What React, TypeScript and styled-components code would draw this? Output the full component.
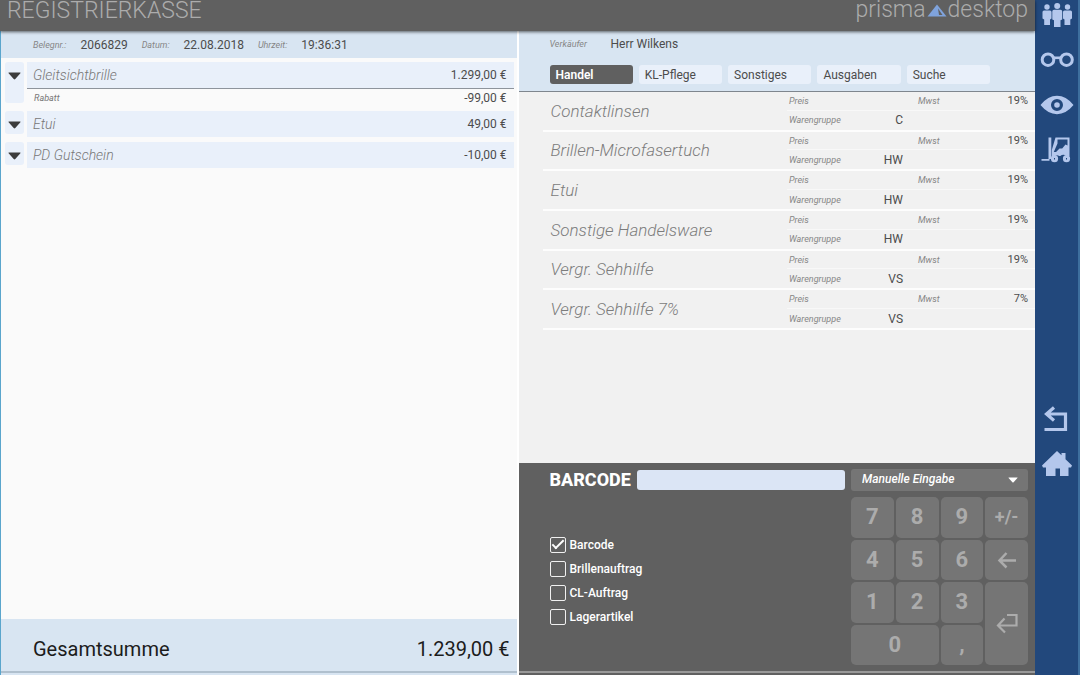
import React, { useState } from "react";
import styled, { createGlobalStyle, css } from "styled-components";

const color = {
  slate: "#606060",
  key: "#757575",
  keyText: "#acacac",
  rail: "#22487c",
  railIcon: "#b4c7ec",
  bar: "#d8e5f2",
  row: "#e9f0fa",
  label: "#868686",
  text: "#4c4c4c",
};

const GlobalStyle = createGlobalStyle`
  *, *::before, *::after { box-sizing: border-box; }
  body {
    margin: 0;
    background: #fafafa;
    color: ${color.text};
    font-family: Roboto, "Liberation Sans", sans-serif;
    font-size: 12px;
    line-height: 16px;
  }
  button, input, select { font: inherit; color: inherit; margin: 0; }
  button { border: 0; padding: 0; background: none; cursor: pointer; }
  ul, dl, dd, h1, h2 { margin: 0; padding: 0; }
  ul { list-style: none; }
`;

const Shell = styled.div`
  display: grid;
  grid-template-columns: minmax(0, 1fr) 45px;
  min-height: 100vh;
`;

const Workspace = styled.div`
  display: flex;
  flex-direction: column;
`;

const Header = styled.header`
  display: flex;
  justify-content: space-between;
  z-index: 1;
  height: 31px;
  padding: 0 7px;
  background: ${color.slate};
  box-shadow: 0 1px 3px rgba(0, 0, 0, 0.6);
  color: #acacac;
  font-weight: 300;
`;

const Title = styled.h1`
  font-size: 23px;
  line-height: 21px;
  font-weight: 300;
`;

const Brand = styled.div`
  display: flex;
  align-items: center;
  height: 20px;
  gap: 1px;
  font-size: 23px;
  line-height: 20px;
`;

const Panels = styled.main`
  flex: 1;
  display: grid;
  grid-template-columns: minmax(0, 1fr) minmax(0, 1fr);
`;

const Receipt = styled.section`
  display: flex;
  flex-direction: column;
  border-left: 1px solid #5aa5cc;
  border-right: 1px solid #fff;
  background: #fafafa;
`;

const ReceiptInfo = styled.dl`
  display: flex;
  align-items: center;
  height: 27px;
  padding-left: 32px;
  background: ${color.bar};
`;

const Label = styled.dt`
  color: ${color.label};
  font-size: 9px;
  font-style: italic;
`;

const InfoValue = styled.dd`
  && { margin: 0 14px; }
`;

const Positions = styled.ul`
  display: flex;
  flex-direction: column;
  flex: 1;
  gap: 5px;
  padding: 4px 3px 0 4px;
  border-top: 0;
`;

const Position = styled.li`
  display: grid;
  grid-template-columns: 19px minmax(0, 1fr);
  column-gap: 3px;
  align-items: start;
`;

const Toggle = styled.button<{ $tall?: boolean }>`
  display: flex;
  justify-content: center;
  height: ${(p) => (p.$tall ? "41px" : "23px")};
  padding-top: 10px;
  border-radius: 3px;
  background: ${color.row};
`;

const PositionMain = styled.div`
  display: flex;
  align-items: center;
  justify-content: space-between;
  height: 26px;
  padding: 0 7px 0 6px;
  background: ${color.row};
`;

const PositionName = styled.span`
  color: #777;
  font-size: 14px;
  font-style: italic;
  font-weight: 300;
`;

const Discount = styled.div`
  display: flex;
  align-items: center;
  justify-content: space-between;
  height: 18px;
  padding: 0 7px;
  border-top: 1px solid #8e949c;
`;

const DiscountName = styled.span`
  color: #777;
  font-size: 9px;
  font-style: italic;
`;

const Total = styled.div`
  display: flex;
  align-items: center;
  justify-content: space-between;
  height: 56px;
  padding: 4px 7px 0 32px;
  background: linear-gradient(#b0c0ce, #b0c0ce) 0 52px / 100% 2px no-repeat ${color.bar};
  color: #1c1c1c;
  font-size: 20px;
  line-height: 24px;
`;

const Sales = styled.section`
  display: flex;
  flex-direction: column;
  border-left: 1px solid #fff;
  background: #f1f1f1;
`;

const SalesHead = styled.div`
  height: 61px;
  padding: 5px 45px 0 31px;
  border-bottom: 1px solid #7f868e;
  background: ${color.bar};
`;

const Seller = styled.dl`
  display: grid;
  grid-template-columns: 61px auto;
  align-items: center;
  margin-bottom: 13px;
`;

const Tabs = styled.div`
  display: grid;
  grid-template-columns: repeat(5, minmax(0, 1fr));
  gap: 6px;
`;

const Tab = styled.button`
  height: 19px;
  padding: 0 6px;
  border-radius: 3px;
  background: ${color.row};
  text-align: left;
  line-height: 18px;
  &[aria-selected="true"] {
    background: ${color.slate};
    color: #fff;
    font-weight: 600;
  }
`;

const Products = styled.ul`
  display: grid;
  grid-auto-rows: minmax(0, 1fr);
  height: 238px;
  margin-left: 24px;
`;

const Product = styled.li`
  display: grid;
  grid-template-columns: minmax(0, 1fr) 248px;
  border-bottom: 2px solid #fdfdfd;
`;

const ProductName = styled.button`
  padding: 0 0 0 8px;
  color: #7c7c7c;
  font-size: 17px;
  font-style: italic;
  font-weight: 300;
  text-align: left;
`;

const Details = styled.dl`
  display: grid;
  grid-template-rows: 1fr 1fr;
`;

const DetailLine = styled.div<{ $divided?: boolean }>`
  display: grid;
  grid-template-columns: 60px 54px 60px 1fr;
  align-items: center;
  padding: 0 7px 0 2px;
  ${(p) =>
    p.$divided &&
    css`
      border-bottom: 1px solid #f8f8f8;
    `}
`;

const DetailValue = styled.dd<{ $wide?: boolean }>`
  text-align: right;
  font-size: ${(p) => (p.$wide ? "12px" : "11px")};
`;

const Entry = styled.section`
  display: grid;
  grid-template-columns: minmax(0, 1fr) 177px;
  column-gap: 6px;
  margin-top: auto;
  height: 212px;
  padding: 6px 7px 0 31px;
  background: linear-gradient(#999, #999) 0 208px / 100% 2px no-repeat ${color.slate};
  color: #fff;
`;

const BarcodeRow = styled.div`
  display: flex;
  align-items: center;
  gap: 6px;
  height: 22px;
  margin-bottom: 46px;
`;

const BarcodeLabel = styled.label`
  font-size: 18px;
  font-weight: 800;
  line-height: 22px;
`;

const BarcodeInput = styled.input`
  flex: 1;
  min-width: 0;
  height: 20px;
  padding: 0 6px;
  border: 0;
  border-radius: 3px;
  background: #dbe5f5;
  color: #333;
`;

const Options = styled.div`
  display: flex;
  flex-direction: column;
  gap: 8px;
`;

const Option = styled.label`
  display: flex;
  align-items: center;
  gap: 4px;
  height: 16px;
  font-weight: 500;
`;

const CheckBox = styled.input`
  display: grid;
  place-items: center;
  width: 16px;
  height: 16px;
  border: 1px solid #f0f0f0;
  border-radius: 2px;
  appearance: none;
  &:checked::before {
    content: "";
    width: 12px;
    height: 6px;
    margin-bottom: 4px;
    border: solid #fff;
    border-width: 0 0 2px 2px;
    transform: rotate(-45deg);
  }
`;

const EntryPad = styled.div`
  display: flex;
  flex-direction: column;
  gap: 6px;
`;

const ModeField = styled.div`
  display: grid;
  align-items: center;
  & > * { grid-area: 1 / 1; }
  & > svg { justify-self: end; margin-right: 10px; pointer-events: none; }
`;

const ModeSelect = styled.select`
  width: 100%;
  height: 22px;
  padding: 0 30px 2px 11px;
  border: 0;
  border-radius: 3px;
  background: ${color.key};
  font-style: italic;
  font-weight: 500;
  appearance: none;
`;

const Keys = styled.div`
  display: grid;
  grid-template-columns: repeat(4, minmax(0, 1fr));
  grid-template-rows: repeat(4, minmax(0, 1fr));
  gap: 2px;
  height: 168px;
`;

const Key = styled.button<{ $cols?: number; $rows?: number; $small?: boolean }>`
  display: flex;
  align-items: center;
  justify-content: center;
  grid-column: span ${(p) => p.$cols ?? 1};
  grid-row: span ${(p) => p.$rows ?? 1};
  border-radius: 5px;
  background: ${color.key};
  color: ${color.keyText};
  font-size: ${(p) => (p.$small ? "18px" : "22px")};
  font-weight: 700;
`;

const Rail = styled.nav`
  display: flex;
  flex-direction: column;
  align-items: center;
  gap: 15px;
  padding-bottom: 196px;
  border-right: 2px solid #3e6f9e;
  background: ${color.rail};
`;

const RailButton = styled.button<{ $last?: boolean }>`
  height: 30px;
  color: ${color.railIcon};
  ${(p) =>
    p.$last &&
    css`
      margin-top: auto;
    `}
  svg { display: block; }
`;

const Arrow = ({ fill = "#3c3c3c", width = 13, height = 8 }) => (
  <svg width={width} height={height} viewBox="0 0 13 8" fill={fill} aria-hidden="true">
    <path d="M1 0.5h11q1 0 .4.8L7.3 7q-.8.9-1.6 0L.6 1.300Q0 .5 1 .5z" />
  </svg>
);

const Icon = ({ children }: { children: React.ReactNode }) => (
  <svg width="36" height="30" viewBox="0 0 36 30" fill="currentColor" aria-hidden="true">
    {children}
  </svg>
);

const PeopleIcon = () => (
  <Icon>
    <circle cx="8" cy="7" r="2.700" />
    <path d="M5 10.500h6q1.500 0 1.500 1.500v6.500l-1.500 1V25H5.200v-5.500L3.500 18.500V12q0-1.500 1.500-1.500z" />
    <circle cx="28.500" cy="7" r="2.700" />
    <path d="M25.500 10.500h6q1.500 0 1.500 1.500v6.500l-1.700 1V25h-5.800v-5.500l-1.500-1V12q0-1.500 1.500-1.500z" />
    <circle cx="18.200" cy="6" r="3" />
    <path d="M15 9.700h6.500q1.700 0 1.700 1.700v8l-1.700.8V27h-6.500v-6.800l-1.700-.8v-8q0-1.700 1.700-1.700z" />
  </Icon>
);

const GlassesIcon = () => (
  <Icon>
    <g fill="none" stroke="currentColor" strokeWidth="3">
      <circle cx="9" cy="14.700" r="5.800" />
      <circle cx="27.500" cy="14.700" r="5.800" />
      <path d="M14 12.800h8.500" strokeWidth="2.600" />
    </g>
  </Icon>
);

const EyeIcon = () => (
  <Icon>
    <path
      fillRule="evenodd"
      d="M1.500 15Q9 5.800 18 5.800T34.500 15Q27 24.200 18 24.200T1.500 15zM18 9a6 6 0 1 0 0 12a6 6 0 1 0 0-12zM18 12.200a2.800 2.800 0 1 1 0 5.600a2.800 2.800 0 1 1 0-5.600z"
    />
  </Icon>
);

const ForkliftIcon = () => (
  <Icon>
    <path d="M9.500 2.500h2.800V24H9.500zM2.500 24h8v1.700h-8z" />
    <path
      fillRule="evenodd"
      d="M16.500 2.500h14V21h-3.200q-3-2.600-6 0h-1q-3-2-6 1h-1.500V15zM18.500 4.500v4L14.800 17h2.200l3.500-3.500h2.700l3.300-4 2 1V4.500z"
    />
    <circle cx="15.500" cy="23.700" r="3.600" />
    <circle cx="27.500" cy="23.700" r="3.600" />
    <path d="M15 23.700h1M27 23.700h1" stroke={color.rail} strokeWidth="1.500" />
  </Icon>
);

const BackIcon = () => (
  <Icon>
    <path
      d="M15 3.500L7.500 10l7.500 6.500M8 10h18.500v15.500H5.500"
      fill="none"
      stroke="currentColor"
      strokeWidth="3.200"
    />
  </Icon>
);

const HomeIcon = () => (
  <Icon>
    <path d="M18 2l4.500 4.300V4h4v6.200L33 16.500l-1 2h-2.500V27H21v-7.500h-4.500V27H7v-8.500H4l-1-2z" />
  </Icon>
);

const Prism = () => (
  <svg width="20" height="13" viewBox="0 0 20 13" aria-hidden="true">
    <path d="M10 0.500L19.500 12.500H.500z" fill="#7fa3dc" />
    <path d="M11 4.500L15.500 11H12z" fill={color.slate} />
  </svg>
);

const BackspaceIcon = () => (
  <svg width="20" height="18" viewBox="0 0 20 18" fill="none" stroke={color.keyText} strokeWidth="2.500" aria-hidden="true">
    <path d="M9.500 2L2.500 9.500l7 7M3 9.500h16" />
  </svg>
);

const EnterIcon = () => (
  <svg width="24" height="22" viewBox="0 0 24 22" fill="none" stroke={color.keyText} strokeWidth="2.200" aria-hidden="true">
    <path d="M9.500 5.500L3 12.500l7 7M3.500 12.500H21.500V2H12" />
  </svg>
);

const positions = [
  { name: "Gleitsichtbrille", amount: "1.299,00 €", discount: "-99,00 €" },
  { name: "Etui", amount: "49,00 €" },
  { name: "PD Gutschein", amount: "-10,00 €" },
];

const tabs = ["Handel", "KL-Pflege", "Sonstiges", "Ausgaben", "Suche"];

const products = [
  { name: "Contaktlinsen", tax: "19%", group: "C" },
  { name: "Brillen-Microfasertuch", tax: "19%", group: "HW" },
  { name: "Etui", tax: "19%", group: "HW" },
  { name: "Sonstige Handelsware", tax: "19%", group: "HW" },
  { name: "Vergr. Sehhilfe", tax: "19%", group: "VS" },
  { name: "Vergr. Sehhilfe 7%", tax: "7%", group: "VS" },
];

const options = ["Barcode", "Brillenauftrag", "CL-Auftrag", "Lagerartikel"];

export default function App() {
  const [tab, setTab] = useState("Handel");
  const [checked, setChecked] = useState<string[]>(["Barcode"]);
  const [code, setCode] = useState("");

  const toggle = (name: string) =>
    setChecked((list) => (list.includes(name) ? list.filter((n) => n !== name) : [...list, name]));
  const type = (char: string) => () => setCode((c) => c + char);

  return (
    <>
      <GlobalStyle />
      <Shell>
        <Workspace>
          <Header>
            <Title>REGISTRIERKASSE</Title>
            <Brand>
              <span>prisma</span>
              <Prism />
              <span>desktop</span>
            </Brand>
          </Header>
          <Panels>
            <Receipt>
              <ReceiptInfo>
                <Label>Belegnr.:</Label>
                <InfoValue>2066829</InfoValue>
                <Label>Datum:</Label>
                <InfoValue>22.08.2018</InfoValue>
                <Label>Uhrzeit:</Label>
                <InfoValue>19:36:31</InfoValue>
              </ReceiptInfo>
              <Positions>
                {positions.map((p) => (
                  <Position key={p.name}>
                    <Toggle $tall={!!p.discount} aria-label={`${p.name} aufklappen`}>
                      <Arrow />
                    </Toggle>
                    <div>
                      <PositionMain>
                        <PositionName>{p.name}</PositionName>
                        <span>{p.amount}</span>
                      </PositionMain>
                      {p.discount && (
                        <Discount>
                          <DiscountName>Rabatt</DiscountName>
                          <span>{p.discount}</span>
                        </Discount>
                      )}
                    </div>
                  </Position>
                ))}
              </Positions>
              <Total>
                <span>Gesamtsumme</span>
                <span>1.239,00 €</span>
              </Total>
            </Receipt>
            <Sales>
              <SalesHead>
                <Seller>
                  <Label>Verkäufer</Label>
                  <dd>Herr Wilkens</dd>
                </Seller>
                <Tabs role="tablist">
                  {tabs.map((t) => (
                    <Tab key={t} role="tab" aria-selected={t === tab} onClick={() => setTab(t)}>
                      {t}
                    </Tab>
                  ))}
                </Tabs>
              </SalesHead>
              <Products>
                {products.map((p) => (
                  <Product key={p.name}>
                    <ProductName>{p.name}</ProductName>
                    <Details>
                      <DetailLine $divided>
                        <Label>Preis</Label>
                        <DetailValue />
                        <Label as="dt" style={undefined}>
                          <Indent>Mwst</Indent>
                        </Label>
                        <DetailValue>{p.tax}</DetailValue>
                      </DetailLine>
                      <DetailLine>
                        <Label>Warengruppe</Label>
                        <DetailValue $wide>{p.group}</DetailValue>
                      </DetailLine>
                    </Details>
                  </Product>
                ))}
              </Products>
              <Entry>
                <div>
                  <BarcodeRow>
                    <BarcodeLabel htmlFor="barcode">BARCODE</BarcodeLabel>
                    <BarcodeInput id="barcode" value={code} onChange={(e) => setCode(e.target.value)} />
                  </BarcodeRow>
                  <Options>
                    {options.map((o) => (
                      <Option key={o}>
                        <CheckBox type="checkbox" checked={checked.includes(o)} onChange={() => toggle(o)} />
                        {o}
                      </Option>
                    ))}
                  </Options>
                </div>
                <EntryPad>
                  <ModeField>
                    <ModeSelect aria-label="Eingabeart">
                      <option>Manuelle Eingabe</option>
                    </ModeSelect>
                    <Arrow fill="#fff" width={10} height={6} />
                  </ModeField>
                  <Keys>
                    <Key onClick={type("7")}>7</Key>
                    <Key onClick={type("8")}>8</Key>
                    <Key onClick={type("9")}>9</Key>
                    <Key $small>+/-</Key>
                    <Key onClick={type("4")}>4</Key>
                    <Key onClick={type("5")}>5</Key>
                    <Key onClick={type("6")}>6</Key>
                    <Key aria-label="Löschen" onClick={() => setCode((c) => c.slice(0, -1))}>
                      <BackspaceIcon />
                    </Key>
                    <Key onClick={type("1")}>1</Key>
                    <Key onClick={type("2")}>2</Key>
                    <Key onClick={type("3")}>3</Key>
                    <Key $rows={2} aria-label="Eingabe">
                      <EnterIcon />
                    </Key>
                    <Key $cols={2} onClick={type("0")}>0</Key>
                    <Key onClick={type(",")}>,</Key>
                  </Keys>
                </EntryPad>
              </Entry>
            </Sales>
          </Panels>
        </Workspace>
        <Rail aria-label="Module">
          <RailButton aria-label="Kunden"><PeopleIcon /></RailButton>
          <RailButton aria-label="Brillen"><GlassesIcon /></RailButton>
          <RailButton aria-label="Kontaktlinsen"><EyeIcon /></RailButton>
          <RailButton aria-label="Lager"><ForkliftIcon /></RailButton>
          <RailButton aria-label="Zurück" $last><BackIcon /></RailButton>
          <RailButton aria-label="Startseite"><HomeIcon /></RailButton>
        </Rail>
      </Shell>
    </>
  );
}

const Indent = styled.span`
  padding-left: 15px;
`;
